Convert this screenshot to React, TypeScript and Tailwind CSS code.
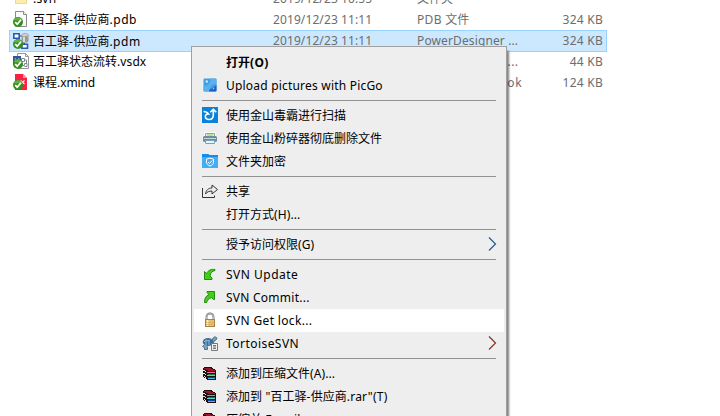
import React from "react";

const LATIN = "font-['Noto_Sans','Noto_Sans_CJK_SC',sans-serif]";

// Splits mixed text so that CJK runs keep their square pitch and Latin runs get their own tracking.
function Mixed({ text, tracking = "tracking-[0.1px]" }: { text: string; tracking?: string }) {
  const runs = text.match(/[\u3400-\u9fff]+|[^\u3400-\u9fff]+/g) ?? [];
  return (
    <span className="whitespace-pre">
      {runs.map((run, i) =>
        /[\u3400-\u9fff]/.test(run) ? (
          <span key={i} className="font-['Noto_Sans_CJK_SC',sans-serif]">{run}</span>
        ) : (
          <span key={i} className={`${LATIN} ${tracking}`}>{run}</span>
        ),
      )}
    </span>
  );
}

function Check() {
  return (
    <g>
      <circle cx="5" cy="11" r="5" fill="#348f1d" />
      <path d="M.6 9a5 5 0 0 1 8.800 0Q5 10.200 .6 9" fill="#62b048" />
      <path d="M2.200 11.200 4.200 13.200 8 8.800" fill="none" stroke="#fff" strokeWidth="1.700" />
    </g>
  );
}

function FileIcon({ kind }: { kind: string }) {
  return (
    <svg width="16" height="16" viewBox="0 0 16 16" className="-mt-px shrink-0">
      {kind === "folder" && <path d="M2.500 0h11v13.500h-11z" fill="#ffedb0" stroke="#f0d98e" />}
      {kind === "page" && (
        <g fill="#fafafa" stroke="#8b8b8b">
          <path d="M2.500.5h8l3 3v12h-11z" />
          <path d="M10.500.5v3h3" />
        </g>
      )}
      {kind === "pdm" && (
        <g>
          <path d="M.8.8h5.400v4.400H.8zM8.800 11.200h5.700v4H8.800z" fill="#fff" stroke="#2859b4" strokeWidth="1.600" />
          <path d="M3.500 6v4h8v1M7 3h2" fill="none" stroke="#334f78" />
          <path d="M8.500 2v6c0 2 7 2 7 0V2" fill="#9a9a9a" />
          <path d="M10 3v6h2V3" fill="#dadada" />
          <ellipse cx="12" cy="2" rx="3.500" ry="1.500" fill="#d4d4d4" stroke="#8e8e8e" strokeWidth=".6" />
        </g>
      )}
      {kind === "vsdx" && (
        <g>
          <path d="M4.500.5h8l3 3v12h-11z" fill="#fff" stroke="#979797" />
          <path d="M12.500.5v3h3" fill="none" stroke="#979797" />
          <path d="M8.500 5.500h3v3h-3zM11.500 7h2v3M8.500 12.500h3v-2h2.500v3h-2.500" fill="none" stroke="#7e8793" />
          <path d="M0 3h8v9H0z" fill="#2f5794" />
          <path d="m2 5 2 5 2-5" fill="none" stroke="#9db5d5" />
        </g>
      )}
      {kind === "xmind" && (
        <g>
          <path d="M2 0h8l4 4v12H2z" fill="#fb2143" />
          <path d="M10 0v4h4" fill="#ff8f9e" />
          <path d="m7.500 6.500 4 3.500m0-3.500-4 3.500" stroke="#fff" strokeWidth="1.100" />
        </g>
      )}
      {kind !== "folder" && <Check />}
    </svg>
  );
}

type FileRow = { kind: string; name: string; nameTracking: string; date?: string; type: string; typeTracking: string; size: string; selected?: boolean };

const files: FileRow[] = [
  { kind: "folder", name: ".svn", nameTracking: "tracking-[0.2px]", date: "2019/12/23 10:55", type: "文件夹", typeTracking: "tracking-[0.1px]", size: "" },
  { kind: "page", name: "百工驿-供应商.pdb", nameTracking: "tracking-[0.55px]", date: "2019/12/23 11:11", type: "PDB 文件", typeTracking: "tracking-[0.35px]", size: "324 KB" },
  { kind: "pdm", name: "百工驿-供应商.pdm", nameTracking: "tracking-[0.5px]", date: "2019/12/23 11:11", type: "PowerDesigner ...", typeTracking: "tracking-[0.12px]", size: "324 KB", selected: true },
  { kind: "vsdx", name: "百工驿状态流转.vsdx", nameTracking: "tracking-[0.1px]", type: "Microsoft Visio ...", typeTracking: "tracking-[0.3px]", size: "44 KB" },
  { kind: "xmind", name: "课程.xmind", nameTracking: "tracking-[-0.1px]", type: "XMind Workbook", typeTracking: "tracking-[0.6px]", size: "124 KB" },
];

function Books() {
  return (
    <svg width="16" height="16" viewBox="0 0 16 16" shapeRendering="crispEdges">
      <path d="M2 2h8v1h1v1h2v1h1v10H5v-1H4v-1H2v-1H1V9h1V8H1V6h1V5H1V3h1z" fill="#1b1214" />
      <path d="M2 3h7v1h2v1h2v1H6V5H4V4H2z" fill="#9c1428" />
      <path d="M5 7h8v1H5z" fill="#f06aa4" />
      <path d="M2 5h1v1H2zM3 6h1v1H3zM2 8h1v1H2zM3 9h1v1H3zM2 11h1v1H2zM3 12h1v1H3z" fill="#e7e7e7" />
      <path d="M6 9h7v1H6z" fill="#187b3b" />
      <path d="M5 10h8v1H5z" fill="#45e2c7" />
      <path d="M6 12h7v1H6z" fill="#183e9e" />
      <path d="M6 13h7v1H6z" fill="#35bfe8" />
    </svg>
  );
}

function MenuIcon({ kind }: { kind?: string }) {
  if (kind === "rar") return <Books />;
  return (
    <svg width="16" height="16" viewBox="0 0 16 16">
      {kind === "picgo" && (
        <g>
          <rect x="1.500" y="1.500" width="13" height="13" rx="1.200" fill="#3f9fe5" />
          <path d="M1.500 9c5 0 7-3 7-7.500h5q1 0 1 1V7c-5 0-7 3-7 7.500h-5q-1 0-1-1z" fill="#5cb0ee" />
          <path d="M7 14.500c0-4 5-2 7.500-7v6q0 1-1 1z" fill="#1f63c8" />
          <circle cx="4.800" cy="4.500" r="1.200" fill="#c9eaff" />
          <circle cx="11.500" cy="11.500" r=".8" fill="#9cc9f5" />
        </g>
      )}
      {kind === "scan" && (
        <g>
          <path d="M0 0h16v16H0z" fill="#0b82d9" />
          <path d="M1.500 4.500c2 0 4 1 5 2.500-4-.5-4.500 5.500.5 5.500 3 0 4.300-2 4.300-4.500V3M8.300 5.300l3-3 3 3" fill="none" stroke="#fff" strokeWidth="1.600" />
        </g>
      )}
      {kind === "shred" && (
        <g>
          <path d="M2 2h12v12H2z" fill="#f8fafb" />
          <path d="M3.500 6V3.500h9V6" fill="#e4f3e1" stroke="#8ba4aa" />
          <path d="M5 5h6" stroke="#91cc45" />
          <rect x="1" y="6" width="14" height="6" rx="1.500" fill="#708c9d" />
          <path d="M2 8.500h12" stroke="#c7d6dc" />
          <path d="M3.500 10.500h9v3h-9z" fill="#eaf5fa" stroke="#6ea5c2" />
        </g>
      )}
      {kind === "folder" && (
        <g>
          <path d="M0 1h6l2 1h8v13H0z" fill="#178be6" />
          <path d="M0 4h16v11H0z" fill="#45adf4" />
          <path d="m8 5 3.500 1.200v3C11.500 11.300 9.500 12.500 8 13c-1.500-.5-3.500-1.700-3.500-3.800v-3z" fill="none" stroke="#fff" />
          <path d="m6 9 1.500 1.500L10.200 7.500" fill="none" stroke="#fff" />
        </g>
      )}
      {kind === "share" && (
        <path d="M.5 5v9.500h12v-2M3.500 11c.5-4 3-6 6.500-6V2l5.500 4.500L10 11V8C7 8 5 9 3.500 11Z" fill="none" stroke="#333" />
      )}
      {kind === "update" && (
        <path d="M2.500 13.500v-8l2 2c2-3.500 4.500-4.500 8.500-4v1C10 5 8.500 7 8 10l2 2v1.500z" fill="#43cf16" stroke="#238a16" />
      )}
      {kind === "commit" && (
        <path d="M2.500 13.500C2.500 9 4 7 7 5.500l-2-2v-1h7.500v8h-1l-2-2c-2.500 1-4 2.500-5 5z" fill="#43cf16" stroke="#238a16" />
      )}
      {kind === "lock" && (
        <g>
          <path d="M4.500 7.500V5a3.500 3.500 0 0 1 7 0v2.500" fill="none" stroke="#737373" strokeWidth="1.900" />
          <path d="M4.500 7.500V5a3.500 3.500 0 0 1 7 0v2.500" fill="none" stroke="#d8d8d8" strokeWidth=".7" />
          <rect x="3.500" y="7.500" width="9" height="7" fill="#e6c374" stroke="#a8823f" />
          <path d="M5.500 8v6" stroke="#fff2c4" strokeWidth="1.500" />
          <path d="M4 10.500h8M4 12.500h8" stroke="#cda455" strokeWidth=".6" />
        </g>
      )}
      {kind === "tortoise" && (
        <g>
          <path d="M2 10 .5 11.500l2 1v2h3v-3M10 7l1-4q2-2.500 4 0l-1 2-2 1-.5 2" fill="#83a5bb" stroke="#4b7590" />
          <ellipse cx="6" cy="7" rx="5.300" ry="4" fill="#3e6f98" />
          <path d="m2 7 2-2 2 1 2-1M4 6v4M7 6v4" stroke="#9bbdd1" fill="none" />
          <path d="M9.500 8.500h6v7h-6z" fill="#f2f2f2" stroke="#777" />
          <path d="M11 10.500h3M11 12h3M11 13.500h3" stroke="#555" strokeWidth=".8" />
        </g>
      )}
    </svg>
  );
}

type Entry = { label?: string; icon?: string; bold?: boolean; arrow?: string; active?: boolean; tracking?: string };

const entries: Entry[] = [
  { label: "打开(O)", bold: true, tracking: "tracking-[0.3px]" },
  { label: "Upload pictures with PicGo", icon: "picgo", tracking: "tracking-[0.2px]" },
  {},
  { label: "使用金山毒霸进行扫描", icon: "scan" },
  { label: "使用金山粉碎器彻底删除文件", icon: "shred" },
  { label: "文件夹加密", icon: "folder" },
  {},
  { label: "共享", icon: "share" },
  { label: "打开方式(H)..." },
  {},
  { label: "授予访问权限(G)", arrow: "#245a91" },
  {},
  { label: "SVN Update", icon: "update", tracking: "tracking-[0.5px]" },
  { label: "SVN Commit...", icon: "commit", tracking: "tracking-[0.25px]" },
  { label: "SVN Get lock...", icon: "lock", active: true, tracking: "tracking-[0.35px]" },
  { label: "TortoiseSVN", icon: "tortoise", arrow: "#803525", tracking: "tracking-[0.45px]" },
  {},
  { label: "添加到压缩文件(A)...", icon: "rar" },
  { label: '添加到 "百工驿-供应商.rar"(T)', icon: "rar", tracking: "tracking-[0.25px]" },
  { label: "压缩并 E-mail...", icon: "rar" },
];

function MenuRow({ item }: { item: Entry }) {
  if (!item.label)
    return (
      <div className="flex h-[7px] items-center pr-[8px] pl-[8px]">
        <div className="h-px w-full bg-[#919191]" />
      </div>
    );
  return (
    <div className={`flex h-[23px] items-center pr-[7px] pl-[8px] text-black ${item.active ? "bg-white" : ""}`}>
      <div className="-mt-px w-[24px] shrink-0"><MenuIcon kind={item.icon} /></div>
      <div className={`flex-1 ${item.bold ? "font-bold" : ""}`}><Mixed text={item.label} tracking={item.tracking} /></div>
      {item.arrow && (
        <svg width="9" height="14" viewBox="0 0 9 14" fill="none" className="-mt-px">
          <path d="m1 .5 6.500 6.500L1 13.500" stroke={item.arrow} strokeWidth="1.200" />
        </svg>
      )}
    </div>
  );
}

export default function App() {
  return (
    <div className="relative h-[416px] w-[720px] overflow-hidden bg-white text-[12px] leading-[18px]">
      <div className="-mt-[12px] pl-[9px]">
        {files.map((f) => (
          <div
            key={f.name}
            className={`flex w-[598px] items-center border pr-[3px] pl-[3px] ${f.selected ? "-mb-px h-[22px] border-[#99d1ff] bg-[#cce8ff]" : "h-[21px] border-transparent"}`}
          >
            <FileIcon kind={f.kind} />
            <div className="w-[240px] shrink-0 pl-[4px] text-black"><Mixed text={f.name} tracking={f.nameTracking} /></div>
            <div className="w-[148px] shrink-0 pl-[4px] text-[#6d6d6d]">{f.date && <Mixed text={f.date} tracking="tracking-[0.1px]" />}</div>
            <div className="w-[110px] shrink-0 text-[#6d6d6d]"><Mixed text={f.type} tracking={f.typeTracking} /></div>
            <div className="flex-1 text-right text-[#6d6d6d]"><Mixed text={f.size} tracking="tracking-[0.25px]" /></div>
          </div>
        ))}
      </div>
      <div className="absolute top-[46px] left-[191px] h-[400px] w-[316px] border border-[#a0a0a0] bg-[#eeeeee] px-[2px] pt-[4px] shadow-[3px_4px_2px_-1px_rgba(0,0,0,0.5)]">
        {entries.map((item, i) => <MenuRow key={i} item={item} />)}
      </div>
    </div>
  );
}
